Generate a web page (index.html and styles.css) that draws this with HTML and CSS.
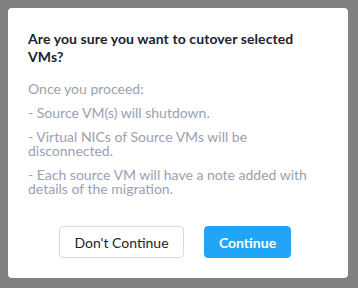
FILE: index.html
```html
<!DOCTYPE html>
<html>
<head>
<meta charset="utf-8">
<link rel="stylesheet" href="styles.css">
</head>
<body>
<div class="dialog">
  <h1 class="title">Are you sure you want to cutover selected VMs?</h1>
  <div class="content">
    <p>Once you proceed:</p>
    <p>- Source VM(s) will shutdown.</p>
    <p>- Virtual NICs of Source VMs will be disconnected.</p>
    <p>- Each source VM will have a note added with details of the migration.</p>
  </div>
  <div class="actions">
    <button class="btn btn-secondary">Don't Continue</button>
    <button class="btn btn-primary">Continue</button>
  </div>
</div>
</body>
</html>
```
FILE: styles.css
```css
html, body {
  margin: 0;
  padding: 0;
  background: #808080;
}
body {
  padding: 8px 10px 10px 8px;
  font-family: Lato, "Noto Sans", sans-serif;
}
.dialog {
  box-sizing: border-box;
  width: 340px;
  height: 270px;
  background: #ffffff;
  border-radius: 4px;
  padding: 22px 20px 20px 20px;
  display: flex;
  flex-direction: column;
}
.title {
  margin: 0;
  font-size: 14px;
  font-weight: 700;
  line-height: 18px;
  letter-spacing: 0.1px;
  color: #1d2230;
  padding-right: 10px;
}
.content {
  margin-top: 16px;
  color: #9aa1b2;
  font-size: 14px;
  line-height: 14px;
  padding-right: 10px;
}
.content p {
  margin: 0 0 10px 0;
}
.actions {
  margin-top: auto;
  display: flex;
  justify-content: center;
  gap: 20px;
  padding-right: 6px;
}
.btn {
  height: 32px;
  border-radius: 4px;
  font-family: inherit;
  font-size: 14px;
  padding: 0;
  cursor: pointer;
}
.btn-secondary {
  width: 125px;
  background: #ffffff;
  border: 1px solid #d6d9df;
  color: #1d2230;
}
.btn-primary {
  width: 87px;
  background: #22a5f7;
  border: 1px solid #22a5f7;
  color: #ffffff;
  font-weight: 700;
}
```
